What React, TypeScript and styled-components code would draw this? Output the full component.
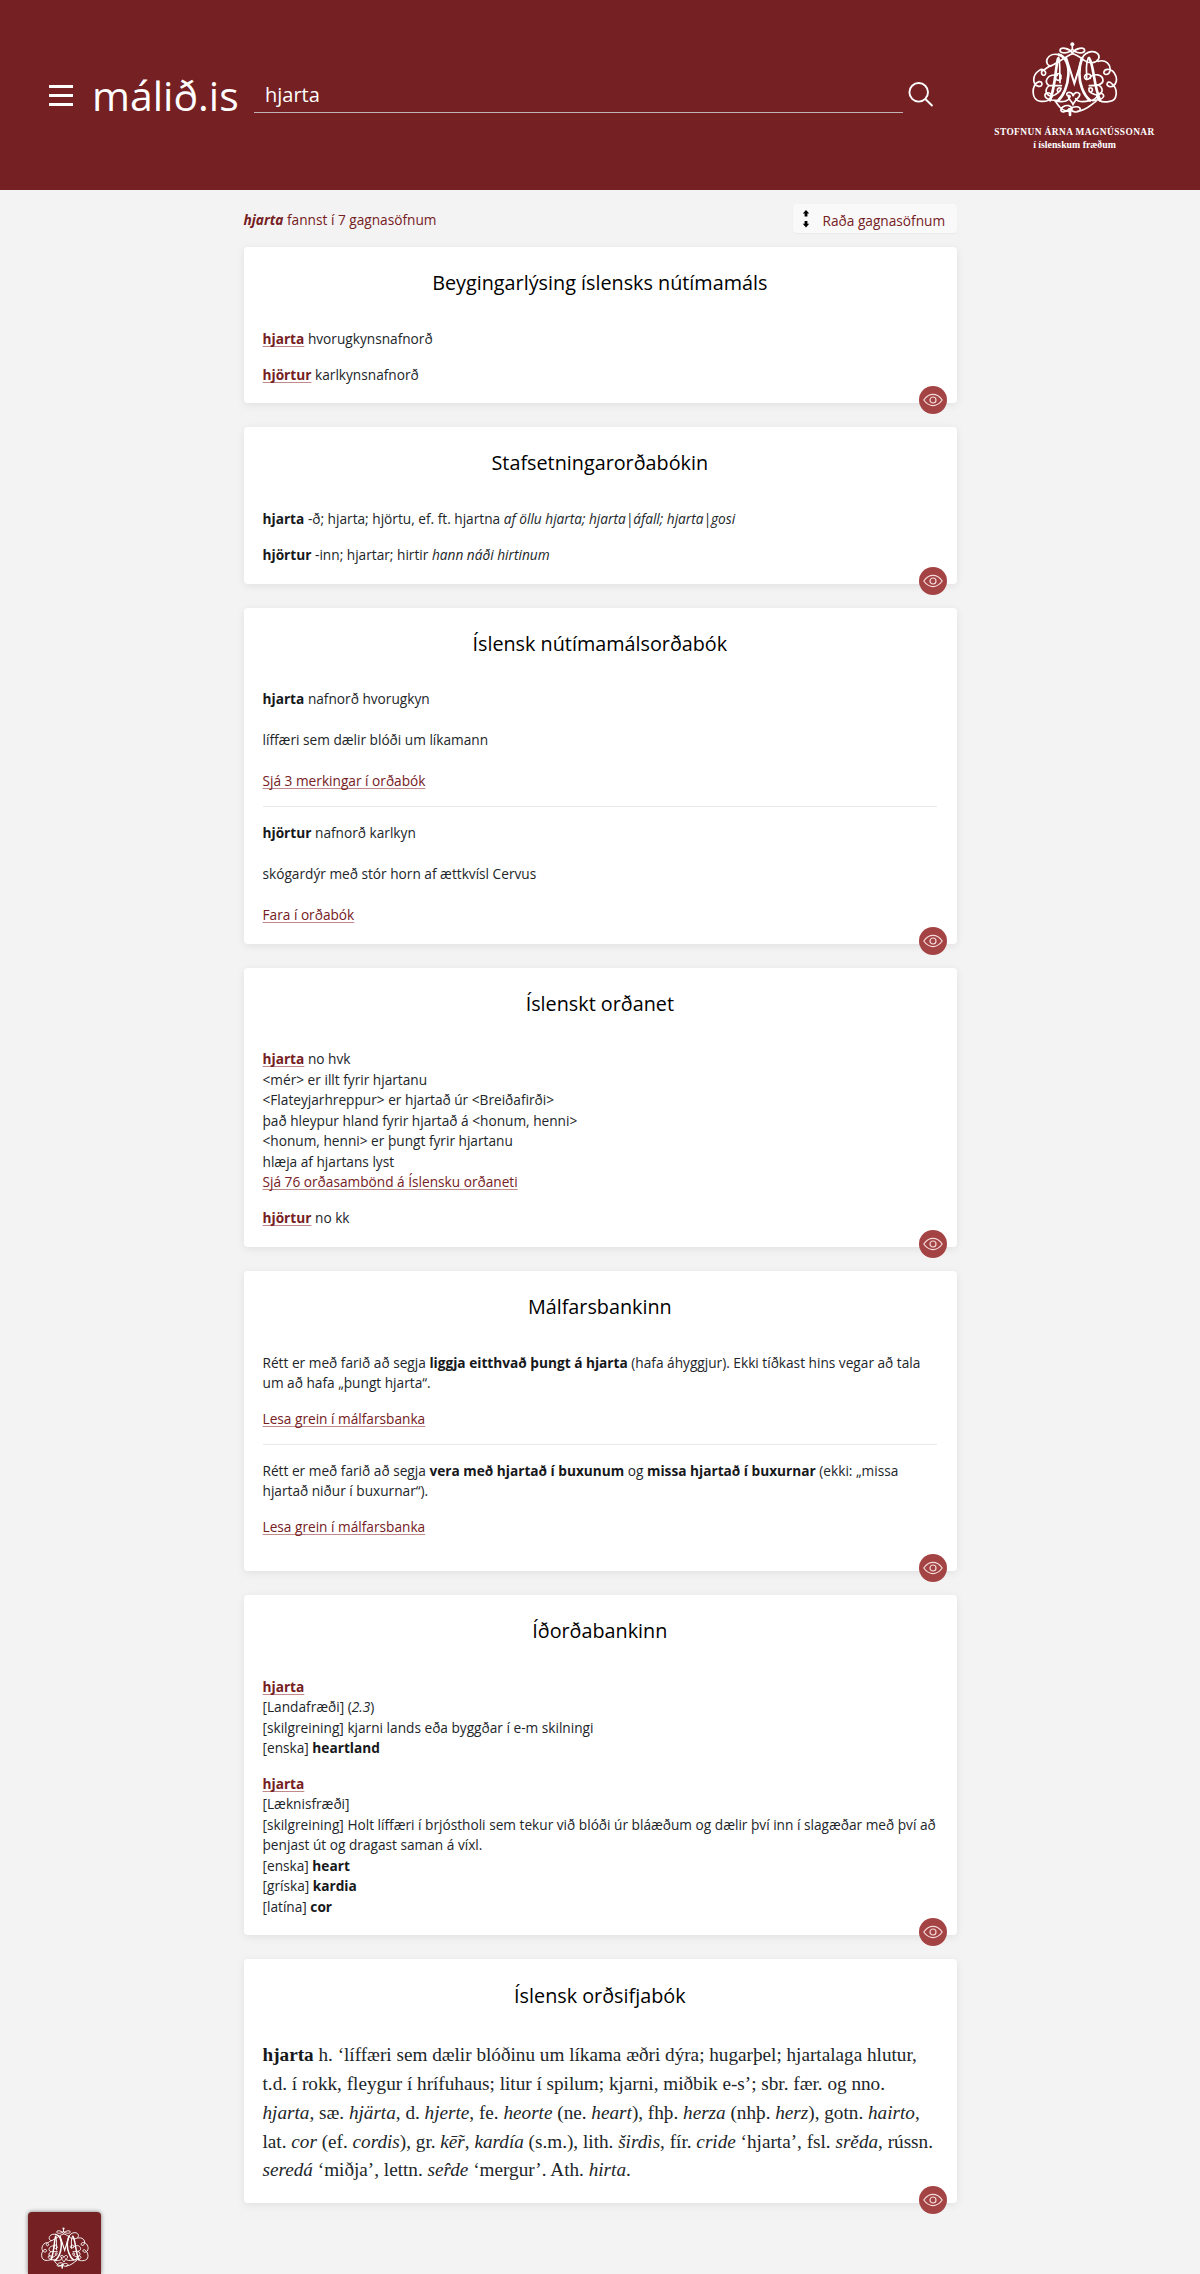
import { ReactNode } from 'react'
import styled, { createGlobalStyle } from 'styled-components'

const GlobalStyle = createGlobalStyle`
    * {
        box-sizing: border-box;
    }
    body {
        margin: 0;
        background: #f3f3f3;
        color: #212529;
        font-family: 'Open Sans', sans-serif;
        font-size: 13.68px;
        line-height: 20.45px;
    }
    p {
        margin: 0;
    }
    b {
        font-weight: 700;
        color: #16181b;
    }
`
const Page = styled.div`
    position: relative;
    height: 2274px;
    overflow: hidden;
`
const Header = styled.header`
    display: flex;
    align-items: flex-start;
    height: 190px;
    padding-left: 49px;
    background: #752023;
    color: #fff;
`
const MenuButton = styled.button`
    display: flex;
    flex-direction: column;
    justify-content: space-between;
    width: 24px;
    height: 21px;
    margin: 85px 19px 0 0;
    padding: 0;
    border: 0;
    background: none;
`
const MenuBar = styled.span`
    height: 3px;
    background: #fff;
`
const SiteName = styled.a`
    width: 162px;
    margin-top: 67px;
    font-size: 41px;
    line-height: 56px;
    white-space: nowrap;
`
const SearchInput = styled.input`
    width: 649px;
    height: 37px;
    margin-top: 76px;
    padding: 0 0 0 11px;
    border: 0;
    border-bottom: 1px solid #bfb3b3;
    background: none;
    color: #fff;
    font-family: inherit;
    font-size: 20px;
`
const SearchIcon = styled.svg`
    width: 26px;
    height: 26px;
    margin: 82px 0 0 5px;
`
const Institute = styled.div`
    display: flex;
    flex-direction: column;
    align-items: center;
    width: 163px;
    margin: 42px 0 0 59px;
    font-family: 'Liberation Serif', serif;
`
const InstituteName = styled.span`
    margin-top: 7px;
    font-size: 9.4px;
    font-weight: 700;
    letter-spacing: 0.42px;
    line-height: 15px;
    white-space: nowrap;
`
const InstituteField = styled.span`
    font-size: 9.8px;
    font-weight: 700;
    line-height: 9px;
    white-space: nowrap;
`
const EmblemSvg = styled.svg<{ $width: number }>`
    display: block;
    width: ${(props) => props.$width}px;
    height: auto;
`
const Content = styled.main`
    width: 713px;
    margin: 0 auto;
`
const Toolbar = styled.div`
    display: flex;
    justify-content: space-between;
    height: 57px;
    padding-top: 14px;
    color: #752023;
`
const ResultCount = styled.div`
    padding-top: 6px;
`
const SearchTerm = styled.em`
    font-weight: 700;
`
const SortButton = styled.button`
    display: flex;
    width: 164px;
    height: 29px;
    padding: 6px 0 0 9px;
    border: 0;
    border-radius: 4px;
    background: #f9f9f9;
    box-shadow: 0 1px 2px rgba(0, 0, 0, 0.04);
    color: #752023;
    font-family: inherit;
    font-size: 13.68px;
    line-height: 22px;
    white-space: nowrap;
`
const SortIcon = styled.svg`
    flex: none;
    width: 8px;
    height: 18px;
    margin-right: 13px;
`
const Card = styled.section<{ $height: number }>`
    position: relative;
    height: ${(props) => props.$height}px;
    margin-bottom: 24px;
    padding: 0 19.4px 0 19px;
    border-radius: 4px;
    background: #fff;
    box-shadow: 0 2px 8px rgba(0, 0, 0, 0.08);
`
const CardTitle = styled.h2`
    margin: 0;
    padding: 21.2px 0 30.6px;
    color: #000;
    font-size: 19.8px;
    font-weight: 400;
    line-height: 30px;
    text-align: center;
`
const Entries = styled.div<{ $gap?: number }>`
    display: flex;
    flex-direction: column;
    gap: ${(props) => props.$gap ?? 15.3}px;
`
const Etymology = styled.p`
    font-family: 'Liberation Serif', serif;
    font-size: 19.2px;
    line-height: 28.8px;
`
const Divider = styled.hr`
    height: 1.4px;
    margin: 14.2px 0 16px;
    border: 0;
    background: #e9e9e9;
`
const Link = styled.a`
    color: #752023;
    text-decoration: underline 1px #c08a8c;
    text-decoration-skip-ink: none;
    text-underline-offset: 2px;
    b {
        color: inherit;
    }
`
const EyeButton = styled.button`
    position: absolute;
    right: 10px;
    bottom: -11px;
    display: flex;
    align-items: center;
    justify-content: center;
    width: 28px;
    height: 28px;
    padding: 0;
    border: 0;
    border-radius: 50%;
    background: #a44344;
`
const CornerTab = styled.a`
    position: absolute;
    left: 28px;
    bottom: 0;
    display: flex;
    justify-content: center;
    width: 73px;
    height: 62px;
    padding-top: 11px;
    border-radius: 4px 4px 0 0;
    background: #752023;
    box-shadow: 0 0 4px rgba(0, 0, 0, 0.5);
`

const Emblem = ({ width }: { width: number }) => (
    <EmblemSvg
        $width={width}
        viewBox="18 12 258 228"
        fill="none"
        stroke="#fff"
        strokeWidth="5"
        strokeLinecap="round"
    >
        {/* crown */}
        <circle cx="139" cy="19" r="6" fill="#fff" stroke="none" />
        <path d="M139 19V34M139 34C128 48 103 47 102 37C104 26 128 30 139 44C150 30 174 26 176 37C175 47 150 48 139 34" />
        <path d="M139 47C116 57 101 71 79 82C66 87 58 74 64 62C70 50 85 47 98 50" />
        <path d="M139 47C151 50 163 58 176 68C191 78 211 76 218 62C223 49 210 39 196 41C182 43 173 51 169 60" />
        {/* monogram strokes */}
        <g strokeWidth="8">
            <path d="M98 50C119 55 130 82 127 112C125 145 112 174 97 187" />
            <path d="M168 60C157 90 158 126 168 151C174 167 183 180 192 187" />
            <path d="M96 62C88 91 89 142 72 187" />
            <path d="M189 60C204 80 202 140 222 187" />
        </g>
        <path d="M121 60L145 136L169 59" strokeWidth="6" />
        <path d="M98 58C104 85 100 105 102 134M187 60C177 82 183 99 182 124" />
        <path d="M102 124C111 108 95 101 89 113C84 126 100 132 105 121M94 112C64 106 51 134 70 143H106M70 143C48 157 67 184 88 170C99 160 104 162 105 151C94 146 91 158 98 163" />
        <path d="M190 121C176 132 169 112 184 108C200 107 193 125 190 121C202 104 230 108 231 127C231 139 219 143 190 143M218 142C240 153 223 177 205 169C194 164 187 162 189 151C200 146 203 158 194 163" />
        {/* outer scrolls */}
        <path d="M77 83C62 86 59 95 51 97C43 101 47 115 56 111C65 104 52 89 40 97C18 111 18 141 38 145C51 147 51 129 39 131C15 138 14 190 45 190C72 193 90 171 69 165C52 162 51 182 76 186L100 188" />
        <path d="M216 70C239 63 256 80 252 99C248 114 231 111 234 101C238 89 260 94 266 107C278 125 268 148 251 146C237 143 244 127 254 134C280 154 273 189 251 190C223 197 207 181 215 169C227 160 244 174 223 184L200 188" />
        {/* heart and lower knot */}
        <path d="M88 189C115 195 130 187 132 175C119 176 120 162 130 163C138 164 141 170 141 175C143 163 156 160 161 168C164 178 149 182 141 199C136 187 122 181 129 172M149 182C156 192 174 192 190 188C205 187 212 181 215 169" />
        <path d="M88 189C98 204 104 214 120 219C139 224 145 209 129 203C116 201 103 208 105 218C110 229 129 213 141 208C151 204 166 207 162 217C155 226 139 222 129 212M154 220C182 217 191 203 210 190" />
        <path d="M132 216V231" strokeWidth="8" />
    </EmblemSvg>
)

const EyeIcon = () => (
    <svg width="20" height="14" viewBox="0 0 20 14" fill="none" stroke="#f3d9d9" strokeWidth="1.2">
        <path d="M.8 7C6 -.4 14 -.4 19.2 7C14 14.4 6 14.4 .8 7Z" />
        <circle cx="10" cy="7" r="3" />
    </svg>
)

type DatasetProps = {
    title: string
    height: number
    children: ReactNode
}

const Dataset = ({ title, height, children }: DatasetProps) => (
    <Card $height={height}>
        <CardTitle>{title}</CardTitle>
        {children}
        <EyeButton aria-label="Fela">
            <EyeIcon />
        </EyeButton>
    </Card>
)

const App = () => {
    return (
        <Page>
            <GlobalStyle />
            <Header>
                <MenuButton aria-label="Valmynd">
                    <MenuBar />
                    <MenuBar />
                    <MenuBar />
                </MenuButton>
                <SiteName>málið.is</SiteName>
                <SearchInput type="text" defaultValue="hjarta" />
                <SearchIcon viewBox="0 0 26 26" fill="none" stroke="#fff" strokeWidth="1.9">
                    <circle cx="10.7" cy="10.3" r="9.3" />
                    <path d="M17.3 17L24.5 24" />
                </SearchIcon>
                <Institute>
                    <Emblem width={86} />
                    <InstituteName>STOFNUN ÁRNA MAGNÚSSONAR</InstituteName>
                    <InstituteField>í íslenskum fræðum</InstituteField>
                </Institute>
            </Header>

            <Content>
                <Toolbar>
                    <ResultCount>
                        <SearchTerm>hjarta</SearchTerm> fannst í 7 gagnasöfnum
                    </ResultCount>
                    <SortButton>
                        <SortIcon viewBox="0 0 8 18">
                            <path d="M4 0L7.2 3.6H5.4V6.5H2.6V3.6H.8ZM4 17.4L.8 13.8H2.6V10.9H5.4V13.8H7.2Z" />
                        </SortIcon>
                        Raða gagnasöfnum
                    </SortButton>
                </Toolbar>

                <Dataset title="Beygingarlýsing íslensks nútímamáls" height={156.3}>
                    <Entries>
                        <p><Link><b>hjarta</b></Link> hvorugkynsnafnorð</p>
                        <p><Link><b>hjörtur</b></Link> karlkynsnafnorð</p>
                    </Entries>
                </Dataset>

                <Dataset title="Stafsetningarorðabókin" height={156.3}>
                    <Entries>
                        <p><b>hjarta</b> -ð; hjarta; hjörtu, ef. ft. hjartna <i>af öllu hjarta; hjarta|áfall; hjarta|gosi</i></p>
                        <p><b>hjörtur</b> -inn; hjartar; hirtir <i>hann náði hirtinum</i></p>
                    </Entries>
                </Dataset>

                <Dataset title="Íslensk nútímamálsorðabók" height={336.1}>
                    <Entries $gap={20.5}>
                        <p><b>hjarta</b> nafnorð hvorugkyn</p>
                        <p>líffæri sem dælir blóði um líkamann</p>
                        <p><Link>Sjá 3 merkingar í orðabók</Link></p>
                    </Entries>
                    <Divider />
                    <Entries $gap={20.5}>
                        <p><b>hjörtur</b> nafnorð karlkyn</p>
                        <p>skógardýr með stór horn af ættkvísl Cervus</p>
                        <p><Link>Fara í orðabók</Link></p>
                    </Entries>
                </Dataset>

                <Dataset title="Íslenskt orðanet" height={279.3}>
                    <Entries>
                        <p>
                            <Link><b>hjarta</b></Link> no hvk<br />
                            &lt;mér&gt; er illt fyrir hjartanu<br />
                            &lt;Flateyjarhreppur&gt; er hjartað úr &lt;Breiðafirði&gt;<br />
                            það hleypur hland fyrir hjartað á &lt;honum, henni&gt;<br />
                            &lt;honum, henni&gt; er þungt fyrir hjartanu<br />
                            hlæja af hjartans lyst<br />
                            <Link>Sjá 76 orðasambönd á Íslensku orðaneti</Link>
                        </p>
                        <p><Link><b>hjörtur</b></Link> no kk</p>
                    </Entries>
                </Dataset>

                <Dataset title="Málfarsbankinn" height={300}>
                    <Entries>
                        <p>
                            Rétt er með farið að segja <b>liggja eitthvað þungt á hjarta</b> (hafa áhyggjur). Ekki tíðkast hins vegar að tala um að hafa „þungt hjarta“.
                        </p>
                        <p><Link>Lesa grein í málfarsbanka</Link></p>
                    </Entries>
                    <Divider />
                    <Entries>
                        <p>
                            Rétt er með farið að segja <b>vera með hjartað í buxunum</b> og <b>missa hjartað í buxurnar</b> (ekki: „missa hjartað niður í buxurnar“).
                        </p>
                        <p><Link>Lesa grein í málfarsbanka</Link></p>
                    </Entries>
                </Dataset>

                <Dataset title="Íðorðabankinn" height={340.5}>
                    <Entries>
                        <p>
                            <Link><b>hjarta</b></Link><br />
                            [Landafræði] (<i>2.3</i>)<br />
                            [skilgreining] kjarni lands eða byggðar í e-m skilningi<br />
                            [enska] <b>heartland</b>
                        </p>
                        <p>
                            <Link><b>hjarta</b></Link><br />
                            [Læknisfræði]<br />
                            [skilgreining] Holt líffæri í brjóstholi sem tekur við blóði úr bláæðum og dælir því inn í slagæðar með því að þenjast út og dragast saman á víxl.<br />
                            [enska] <b>heart</b><br />
                            [gríska] <b>kardia</b><br />
                            [latína] <b>cor</b>
                        </p>
                    </Entries>
                </Dataset>

                <Dataset title="Íslensk orðsifjabók" height={243.7}>
                    <Etymology>
                        <b>hjarta</b> h. ‘líffæri sem dælir blóðinu um líkama æðri dýra; hugarþel; hjartalaga hlutur, t.d. í rokk, fleygur í hrífuhaus; litur í spilum; kjarni, miðbik e-s’; sbr. fær. og nno. <i>hjarta</i>, sæ. <i>hjärta</i>, d. <i>hjerte</i>, fe. <i>heorte</i> (ne. <i>heart</i>), fhþ. <i>herza</i> (nhþ. <i>herz</i>), gotn. <i>hairto</i>, lat. <i>cor</i> (ef. <i>cordis</i>), gr. <i>kē̃r</i>, <i>kardía</i> (s.m.), lith. <i>širdìs</i>, fír. <i>cride</i> ‘hjarta’, fsl. <i>srěda</i>, rússn. <i>seredá</i> ‘miðja’, lettn. <i>ser̂de</i> ‘mergur’. Ath. <i>hirta</i>.
                    </Etymology>
                </Dataset>
            </Content>

            <CornerTab aria-label="Árnastofnun">
                <Emblem width={48} />
            </CornerTab>
        </Page>
    )
}

export default App
